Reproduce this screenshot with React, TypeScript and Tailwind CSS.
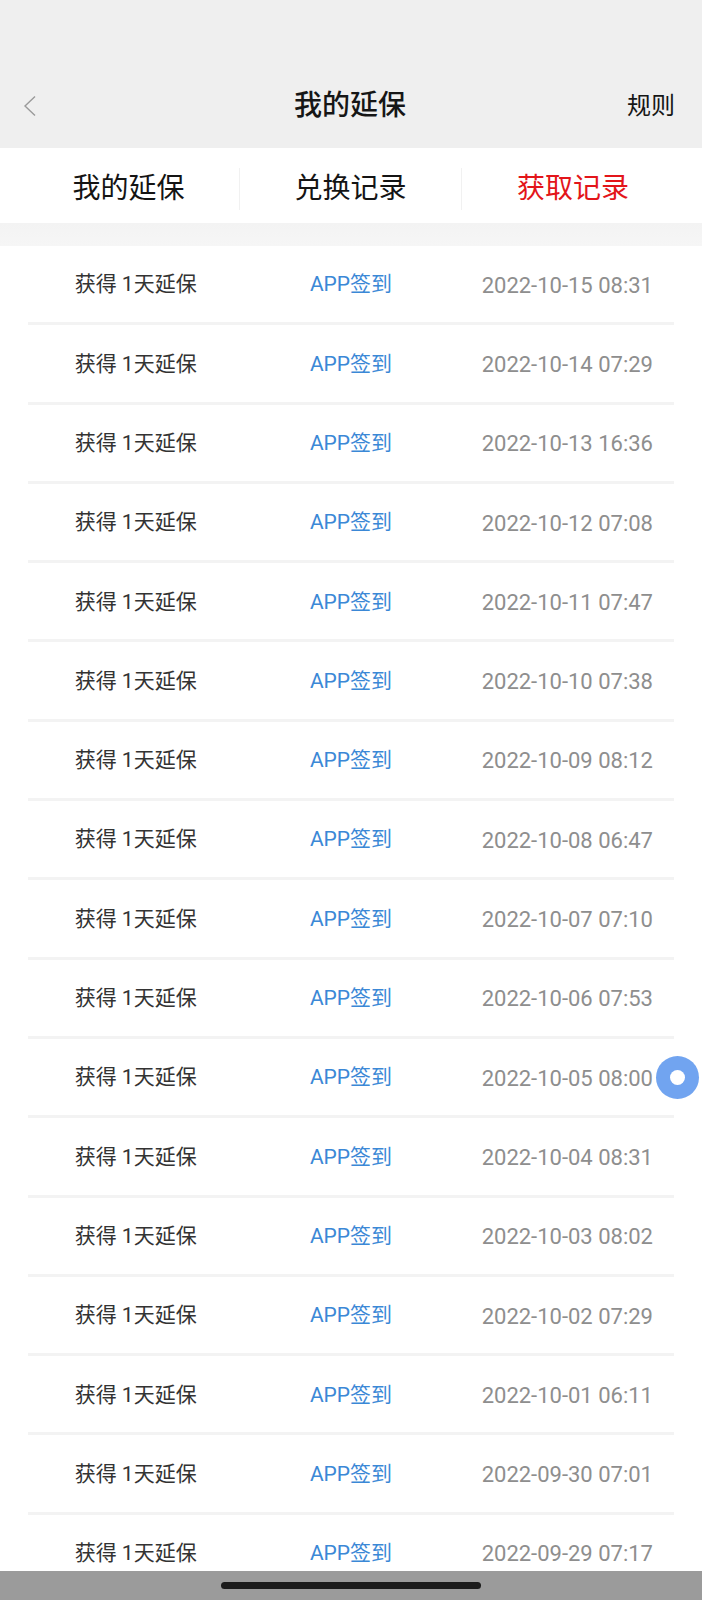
import React from "react";

const records = [
    "2022-10-15 08:31",
    "2022-10-14 07:29",
    "2022-10-13 16:36",
    "2022-10-12 07:08",
    "2022-10-11 07:47",
    "2022-10-10 07:38",
    "2022-10-09 08:12",
    "2022-10-08 06:47",
    "2022-10-07 07:10",
    "2022-10-06 07:53",
    "2022-10-05 08:00",
    "2022-10-04 08:31",
    "2022-10-03 08:02",
    "2022-10-02 07:29",
    "2022-10-01 06:11",
    "2022-09-30 07:01",
    "2022-09-29 07:17",
];

const font = { fontFamily: 'Roboto, "Noto Sans CJK SC", sans-serif' };

export default function App() {
    return (
        <div
            className="relative h-[1600px] w-[702px] overflow-hidden bg-white"
            style={font}
        >
            {/* Header */}
            <div className="h-[148px] bg-[#efefef] pt-[76px]">
                <div className="grid h-[60px] grid-cols-[1fr_auto_1fr] items-center pl-[22px] pr-[27px]">
                    <svg width="16" height="22" viewBox="0 0 16 22" fill="none">
                        <path d="M13 1.5 L3 11 L13 20.5" stroke="#9a9a9a" strokeWidth="1.4" />
                    </svg>
                    <div className="pl-[3px] text-[28px] font-medium text-[#161616]">我的延保</div>
                    <div className="text-right text-[24px] text-[#161616]">规则</div>
                </div>
            </div>

            {/* Tabs */}
            <div className="grid h-[75px] grid-cols-3 bg-white px-[18px]">
                <div className="my-[20px] flex items-center justify-center border-r border-[#f1f1f1] text-[28px] text-[#141414]">
                    我的延保
                </div>
                <div className="my-[20px] flex items-center justify-center border-r border-[#f1f1f1] text-[28px] text-[#141414]">
                    兑换记录
                </div>
                <div className="my-[20px] flex items-center justify-center text-[28px] text-[#e3151a]">
                    获取记录
                </div>
            </div>

            <div className="h-[23px] bg-gradient-to-b from-[#f3f3f3] to-[#f6f6f6]" />

            {/* List */}
            <div className="mx-[28px]">
                {records.map((date) => (
                    <div
                        key={date}
                        className="grid h-[79.3px] grid-cols-3 items-center border-b-[3px] border-[#f3f3f3] pt-[2px] text-center"
                    >
                        <div className="text-[21px] text-[#333333]">获得 1天延保</div>
                        <div className="text-[21px] text-[#3b88d6]">APP签到</div>
                        <div className="pl-[2px] text-[22px] text-[#8e8e8e]">{date}</div>
                    </div>
                ))}
            </div>

            {/* Floating button */}
            <div className="absolute left-[656px] top-[1056px] flex h-[43px] w-[43px] items-center justify-center rounded-full bg-[#71a4f0]">
                <div className="h-[15px] w-[15px] rounded-full bg-white" />
            </div>

            {/* Home indicator bar */}
            <div className="absolute bottom-0 left-0 flex h-[29px] w-full items-center justify-center bg-[#9b9b9b]">
                <div className="h-[7px] w-[260px] rounded-full bg-[#1c1c1c]" />
            </div>
        </div>
    );
}
